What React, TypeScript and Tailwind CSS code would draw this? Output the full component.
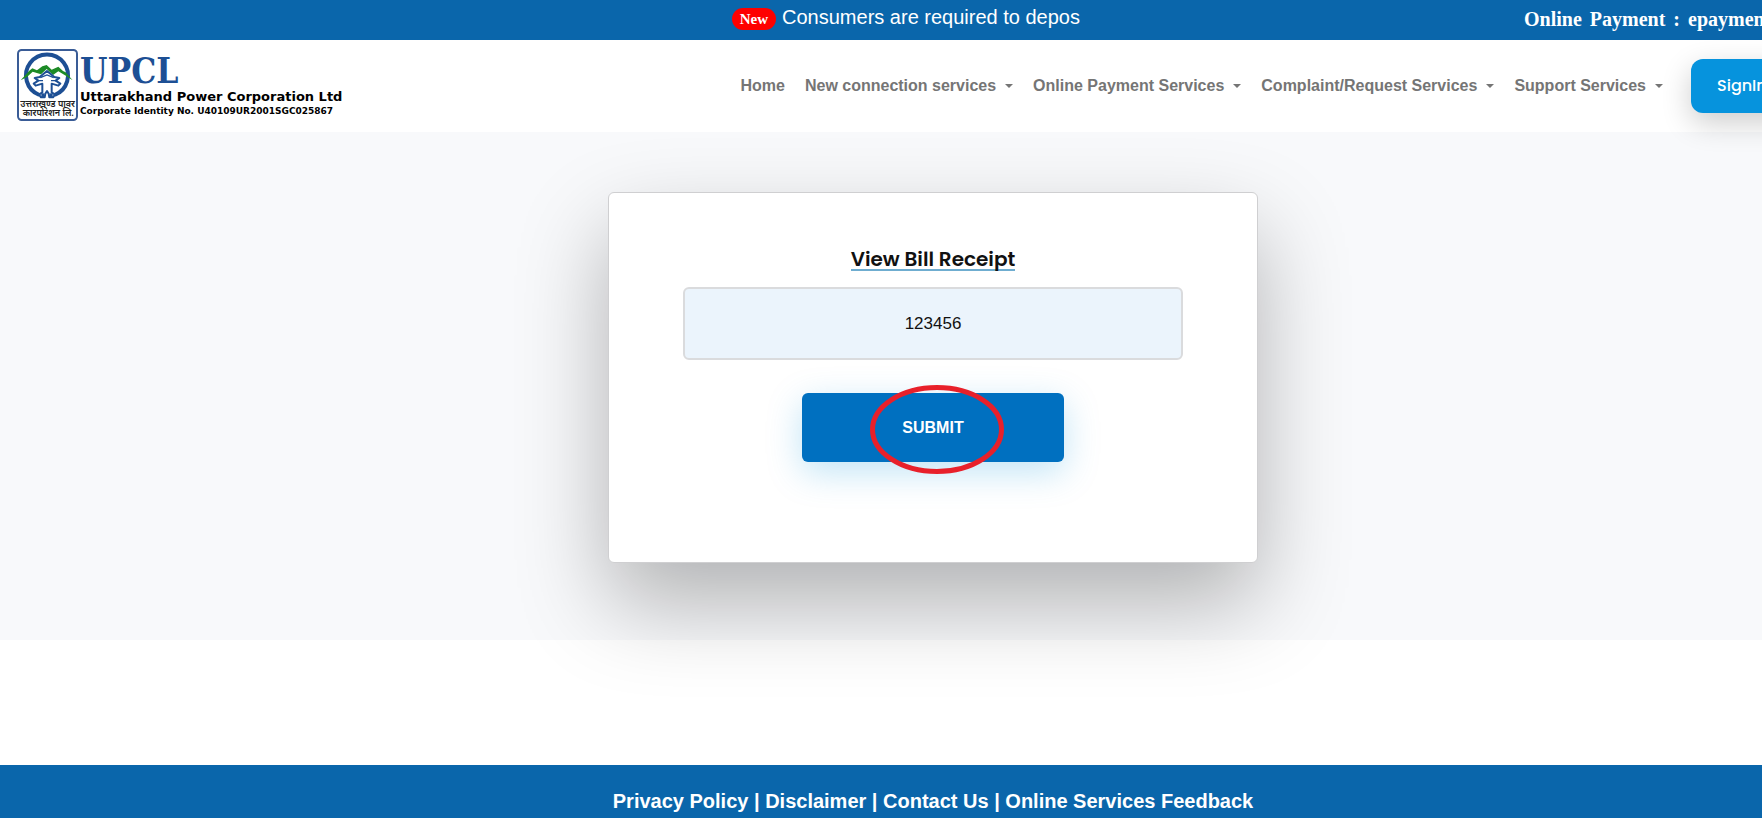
import React from "react";

const menus = [
  "New connection services",
  "Online Payment Services",
  "Complaint/Request Services",
  "Support Services",
];

const footerLinks = ["Privacy Policy", "Disclaimer", "Contact Us", "Online Services Feedback"];

function Emblem() {
  return (
    <svg viewBox="0 0 183 216" className="h-[72px] w-[61px] shrink-0" aria-hidden="true">
      <rect x="3" y="3" width="177" height="210" rx="11" fill="#fff" stroke="#3a5c96" strokeWidth="6" />
      <path d="M67 138 A63 63 0 1 1 113 138" fill="none" stroke="#1d4f94" strokeWidth="12" />
      <path
        d="M11 94 L36 66 L46 58 L60 64 L76 52 L89 48 L104 62 L124 53 L138 66 L146 70 L167 94 L144 79 L124 67 L108 78 L89 60 L72 76 L47 68 L30 84 Z"
        fill="#1c8a26"
      />
      <path
        d="M90 66 L112 84 L127 87 L116 95 L130 104 L124 110 L104 104 L104 130 L114 137 L108 145 L97 145 L95 134 L90 126 L85 134 L83 145 L72 145 L66 137 L76 130 L76 104 L56 110 L50 104 L64 95 L53 87 L68 84 Z"
        fill="#fff"
        stroke="#1d4f94"
        strokeWidth="6"
        strokeLinejoin="round"
      />
      <path d="M70 86 L90 78 L110 86 M64 95 H78 M102 95 H116" stroke="#1d4f94" strokeWidth="4" fill="none" />
      <rect x="73" y="133" width="9" height="13" fill="#1d4f94" />
      <rect x="98" y="133" width="9" height="13" fill="#1d4f94" />
      <g fill="#222" fontFamily="'Noto Sans Devanagari', 'Noto Sans', sans-serif" fontWeight="600" textAnchor="middle">
        <text x="92" y="174" fontSize="27">उत्तराखण्ड पावर</text>
        <text x="94" y="202" fontSize="27">कारपोरेशन लि.</text>
      </g>
    </svg>
  );
}

function Caret() {
  return (
    <svg viewBox="0 0 8 4" className="h-1 w-2" fill="currentColor" aria-hidden="true">
      <path d="M0 0h8L4 4z" />
    </svg>
  );
}

export default function App() {
  return (
    <div className="overflow-hidden bg-white font-['Liberation_Sans',Arial,sans-serif]">
      <div className="flex w-[calc(100%+104px)] flex-col">
        <div className="grid h-10 grid-cols-[1fr_406px_1fr] bg-[#0a66ab] text-white">
          <div />
          <div className="flex items-start justify-end pt-1 pr-14 whitespace-nowrap">
            <div className="flex items-center gap-1.5">
              <span className="mt-1 rounded-full bg-[#fe0000] px-2 font-['Liberation_Serif',serif] text-[15px] leading-[22px] font-bold">
                New
              </span>
              <span className="text-xl leading-[26px]">Consumers are required to depos</span>
            </div>
          </div>
          <div className="flex justify-end gap-2 pt-[7px] font-['Liberation_Serif',serif] text-[20px] leading-6 font-bold whitespace-nowrap">
            <span>Online</span>
            <span>Payment</span>
            <span>:</span>
            <a href="#epayment" className="w-[178px]">epayment</a>
          </div>
        </div>

        <header className="relative z-10 flex h-[92px] items-center justify-between pl-[17px] whitespace-nowrap">
          <a href="#home" className="flex items-center gap-0.5 pb-0.5">
            <Emblem />
            <span className="flex flex-col text-black">
              <span className="font-['DejaVu_Serif_Condensed','DejaVu_Serif',serif] text-[35px] leading-9 font-bold text-[#1d4f94]">
                UPCL
              </span>
              <span className="font-['DejaVu_Sans',sans-serif] text-[13px] leading-4 font-bold">
                Uttarakhand Power Corporation Ltd
              </span>
              <span className="font-['DejaVu_Sans',sans-serif] text-[9px] leading-3 font-bold">
                Corporate Identity No. U40109UR2001SGC025867
              </span>
            </span>
          </a>
          <nav className="flex items-center gap-5 text-base font-bold text-[#757575]">
            <a href="#home">Home</a>
            {menus.map((m) => (
              <button key={m} type="button" className="flex items-center gap-[9px] font-bold">
                {m}
                <Caret />
              </button>
            ))}
            <a
              href="#signin"
              className="ml-2 flex h-[54px] w-[175px] items-center rounded-xl bg-[#0693dd] pl-[26px] font-['Poppins','Inter',sans-serif] font-medium text-white shadow-[0_10px_30px_rgba(0,0,0,0.2)]"
            >
              SignIn
            </a>
          </nav>
        </header>

        <main className="mb-[125px] flex h-[508px] flex-col items-center bg-[#f8f9fb] pt-[60px]">
          <form
            onSubmit={(e) => e.preventDefault()}
            className="flex h-[371px] w-[650px] flex-col items-center rounded-md border border-[#cfcfd1] bg-white px-[74px] pt-[56px] shadow-[0_40px_90px_rgba(0,0,0,0.29)]"
          >
            <h1 className="border-b-2 border-[#6fadd0] font-['Poppins','Inter',sans-serif] text-xl leading-5 font-semibold text-[#111]">
              <label htmlFor="account">View Bill Receipt</label>
            </h1>
            <input
              id="account"
              type="text"
              defaultValue="123456"
              className="mt-4 h-[73px] w-full rounded-md border-2 border-[#dadbdd] bg-[#ebf4fc] text-center text-[17px] text-[#111]"
            />
            <div className="relative mt-[33px]">
              <button
                type="submit"
                className="h-[69px] w-[262px] rounded-md bg-[#0070c0] text-base font-bold text-white shadow-[0_10px_35px_rgba(6,147,221,0.25)]"
              >
                SUBMIT
              </button>
              <svg
                viewBox="0 0 134 89"
                className="pointer-events-none absolute -top-2 left-[68px] h-[89px] w-[134px]"
                aria-hidden="true"
              >
                <ellipse cx="67" cy="44.5" rx="64.5" ry="42" fill="none" stroke="#e8202a" strokeWidth="5" />
              </svg>
            </div>
          </form>
        </main>

        <footer className="flex h-[53px] items-center justify-center overflow-hidden bg-[#0a66ab] pt-[18px] text-xl font-bold whitespace-pre text-white">
          {footerLinks.map((l, i) => (
            <React.Fragment key={l}>
              {i > 0 && <span> | </span>}
              <a href="#info">{l}</a>
            </React.Fragment>
          ))}
        </footer>
      </div>
    </div>
  );
}
